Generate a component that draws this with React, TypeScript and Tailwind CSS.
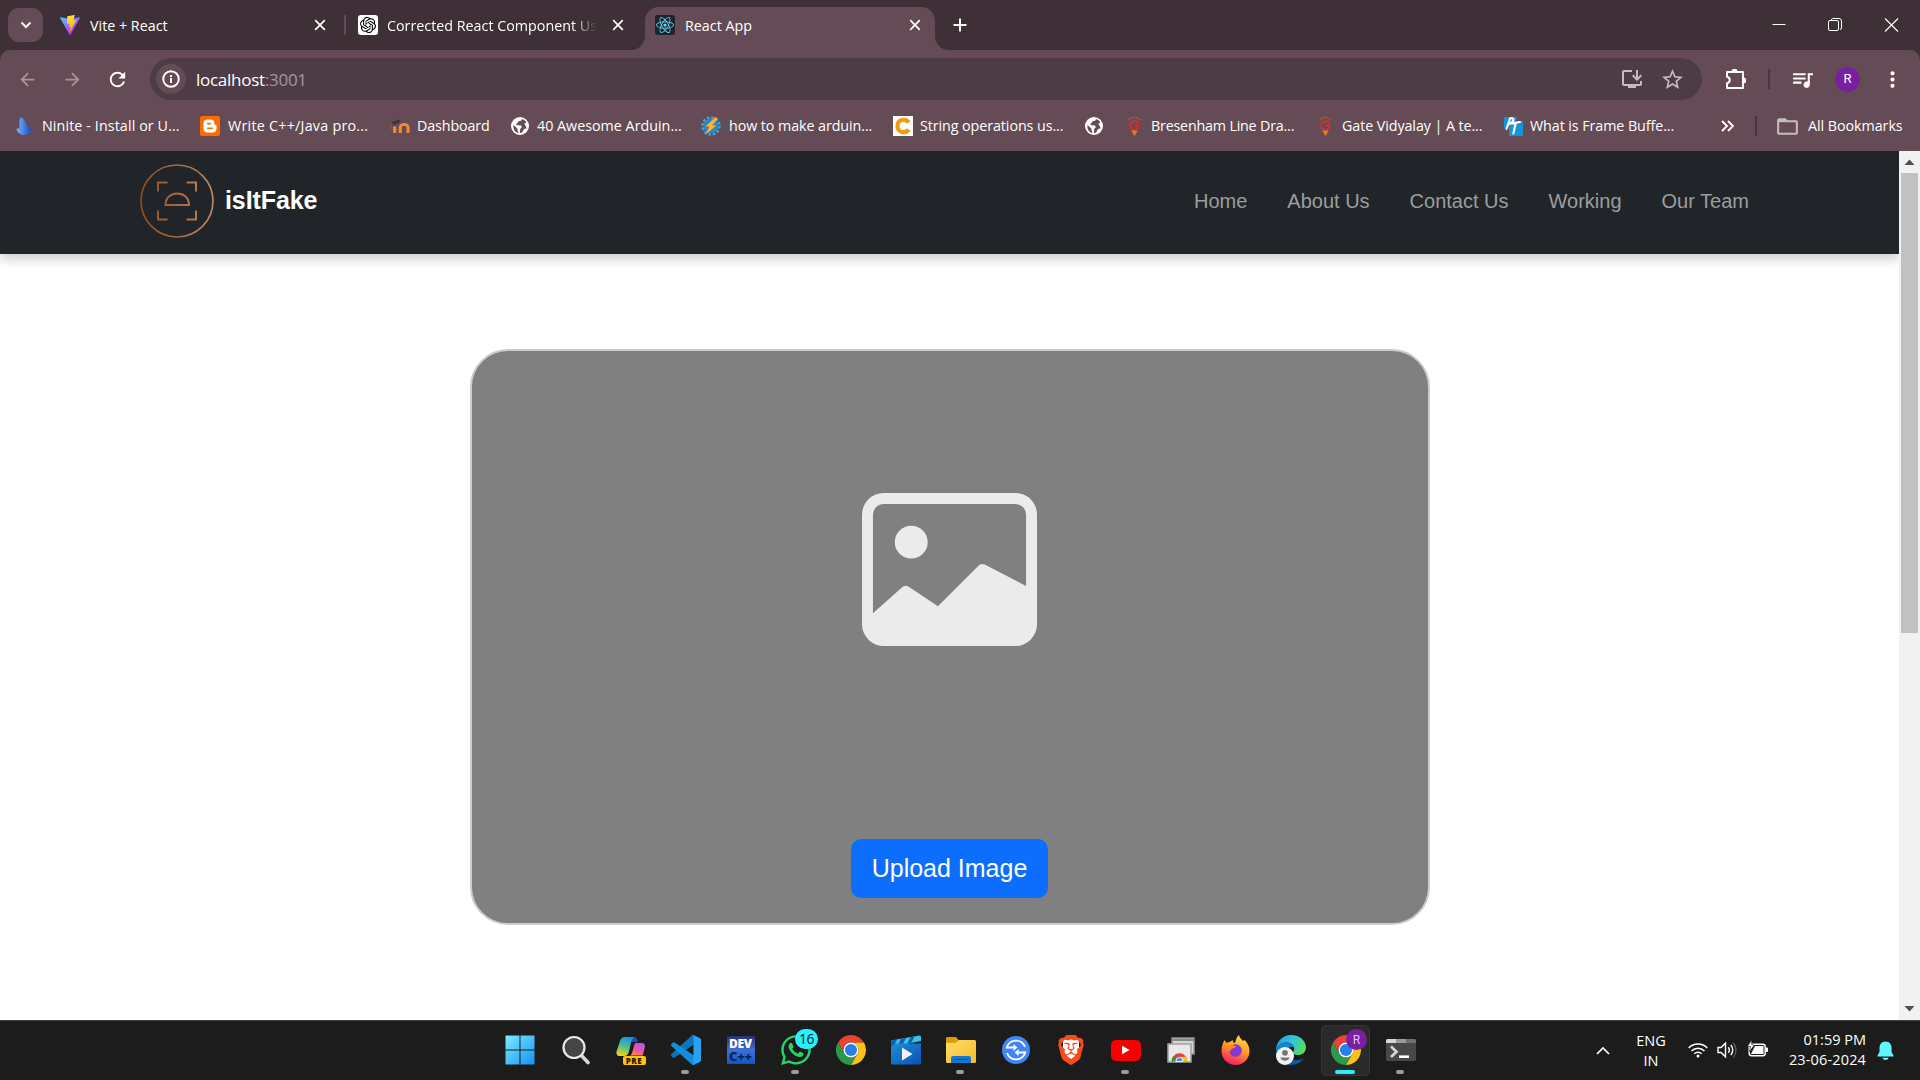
import React from 'react';
import { FaReact, FaWhatsapp } from 'react-icons/fa';
import { SiOpenai, SiBrave } from 'react-icons/si';
import { BsImage } from 'react-icons/bs';
import {
  MdArrowBack, MdArrowForward, MdRefresh, MdOutlineInstallDesktop, MdStarBorder,
  MdQueueMusic, MdMoreVert, MdFolderOpen,
} from 'react-icons/md';

type Kids = { children?: React.ReactNode };

function CloseX() {
  return (
    <svg width="20" height="20" viewBox="0 0 20 20" stroke="#fff" strokeWidth="1.7">
      <path d="M5.2 5.2l9.6 9.6M14.8 5.2l-9.6 9.6" />
    </svg>
  );
}

function ViteLogo() {
  return (
    <svg width="20" height="20" viewBox="0 0 256 257">
      <defs>
        <linearGradient id="viteA" x1="0" x2="0.6" y1="0" y2="0.85"><stop offset="0" stopColor="#41D1FF" /><stop offset="1" stopColor="#BD34FE" /></linearGradient>
        <linearGradient id="viteB" x1="0.4" x2="0.5" y1="0" y2="1"><stop offset="0" stopColor="#FFEA83" /><stop offset="0.1" stopColor="#FFDD35" /><stop offset="1" stopColor="#FFA800" /></linearGradient>
      </defs>
      <path fill="url(#viteA)" d="M255.153 37.938L134.897 252.976c-2.483 4.44-8.862 4.466-11.382.048L.875 37.958c-2.746-4.814 1.371-10.646 6.827-9.67l120.385 21.517a6.537 6.537 0 0 0 2.322-.004l117.867-21.483c5.438-.991 9.574 4.796 6.877 9.62Z" />
      <path fill="url(#viteB)" d="M185.432.063L96.44 17.501a3.268 3.268 0 0 0-2.634 3.014l-5.474 92.456a3.268 3.268 0 0 0 3.997 3.378l24.777-5.718c2.318-.535 4.413 1.507 3.936 3.838l-7.361 36.047c-.495 2.426 1.782 4.5 4.151 3.78l15.304-4.649c2.372-.72 4.652 1.36 4.15 3.788l-11.698 56.621c-.732 3.542 3.979 5.473 5.943 2.437l1.313-2.028l72.516-144.72c1.215-2.423-.88-5.186-3.54-4.672l-25.505 4.922c-2.396.462-4.435-1.77-3.759-4.114l16.646-57.705c.677-2.35-1.37-4.583-3.769-4.113Z" />
    </svg>
  );
}

function TabStrip() {
  return (
    <div className="flex h-[50px] bg-[#3f3037] text-[14.3px] text-white">
      <div className="ml-2 mt-2 flex h-[34px] w-[35px] shrink-0 items-center justify-center rounded-[11px] bg-[#654b55]">
        <svg width="12" height="8" viewBox="0 0 12 8" fill="none" stroke="#fff" strokeWidth="2"><path d="M1.5 1.5L6 6l4.5-4.5" /></svg>
      </div>
      <div className="ml-[17px] flex h-[50px] w-[286px] shrink-0 items-center">
        <ViteLogo />
        <span className="ml-[10px] grow pt-px">Vite + React</span>
        <span className="mr-[14px]"><CloseX /></span>
        <span className="h-5 w-[2px] rounded bg-[#654b55]" />
      </div>
      <div className="ml-[12px] flex h-[50px] w-[270px] shrink-0 items-center">
        <span className="flex size-5 items-center justify-center rounded-[3px] bg-white text-black"><SiOpenai size={16} /></span>
        <span className="ml-[9px] w-[210px] overflow-hidden whitespace-nowrap pt-px [mask-image:linear-gradient(90deg,#000_88%,transparent)]">Corrected React Component Us</span>
        <span className="ml-[11px]"><CloseX /></span>
      </div>
      <div className="-ml-px flex h-[50px] shrink-0">
        <div className="w-[18px] bg-[#654b55]"><div className="h-[50px] w-[18px] rounded-br-[14px] bg-[#3f3037]" /></div>
        <div className="mt-[7px] flex h-[43px] w-[290px] items-center rounded-t-[14px] bg-[#654b55] pb-[7px] pl-[10px] pr-[10px]">
          <span className="flex size-5 items-center justify-center rounded-[3px] bg-[#20232a] text-[#61dafb]"><FaReact size={18} /></span>
          <span className="ml-[10px] grow pt-px">React App</span>
          <CloseX />
        </div>
        <div className="w-[18px] bg-[#654b55]"><div className="h-[50px] w-[18px] rounded-bl-[14px] bg-[#3f3037]" /></div>
      </div>
      <svg className="mt-[18px]" width="14" height="14" viewBox="0 0 14 14" stroke="#fff" strokeWidth="2"><path d="M7 .5v13M.5 7h13" /></svg>
      <div className="ml-auto mt-[17px] flex gap-[42px] pr-[21px]">
        <svg width="14" height="16" viewBox="0 0 14 16" stroke="#fff"><path d="M.5 7.5h13" /></svg>
        <svg width="14" height="16" viewBox="0 0 14 16" stroke="#fff" fill="none"><path d="M3.500 3.500v-1a1.500 1.500 0 0 1 1-1h6.500a2.500 2.500 0 0 1 2.500 2.500v7a1.500 1.500 0 0 1-1.500 1.500" /><rect x=".5" y="3.500" width="10" height="10" rx="1.500" /></svg>
        <svg width="15" height="16" viewBox="0 0 15 16" stroke="#fff" strokeWidth="1.100"><path d="M1 1.500l13 13M14 1.500l-13 13" /></svg>
      </div>
    </div>
  );
}

function Puzzle() {
  return (
    <svg width="24" height="24" viewBox="0 0 24 24" fill="none" stroke="#fff" strokeWidth="2" strokeLinejoin="round">
      <path d="M3 5h5.500a2 2 0 0 1 4 0H19v6.500a2 2 0 0 1 0 4V21H3v-4.800c3.600-.4 3.600-6 0-6.400z" />
      <path d="M8.500 5a2 2 0 0 1 4 0zM19 11.500a2 2 0 0 1 0 4z" fill="#fff" />
    </svg>
  );
}

function Toolbar() {
  return (
    <div className="bg-[#3f3037]">
      <div className="flex h-[58px] items-center rounded-t-[10px] bg-[#654b55]">
        <MdArrowBack className="ml-[17px]" size={21} color="#a6959c" />
        <MdArrowForward className="ml-6" size={21} color="#a6959c" />
        <MdRefresh className="ml-[23px]" size={23} color="#fff" />
        <div className="ml-[21px] flex h-[42px] w-[1552px] items-center rounded-full bg-[#4d3c45] pl-[6px] pr-[17px]">
          <span className="flex size-[30px] items-center justify-center rounded-full bg-[#654b55]">
            <svg width="18" height="18" viewBox="0 0 18 18" fill="none" stroke="#fff" strokeWidth="1.900"><circle cx="9" cy="9" r="7.800" /><path d="M9 8v5M9 5v1.900" /></svg>
          </span>
          <span className="ml-[10px] grow pt-px text-[17px] tracking-[-0.27px] text-white">localhost<span className="text-[#a6959c]">:3001</span></span>
          <MdOutlineInstallDesktop size={24} color="#c4bcc0" />
          <MdStarBorder className="ml-4" size={25} color="#c4bcc0" />
        </div>
        <span className="ml-[22px]"><Puzzle /></span>
        <span className="ml-[20px] h-5 w-[2px] bg-[#4a3840]" />
        <MdQueueMusic className="ml-[20px]" size={25} color="#fff" />
        <span className="ml-[20px] flex size-[25px] items-center justify-center rounded-full bg-[#7b1fa2] font-['Roboto'] text-[13px] text-white">R</span>
        <MdMoreVert className="ml-[20px]" size={25} color="#fff" />
      </div>
    </div>
  );
}

function Globe() {
  return (
    <svg width="18" height="18" viewBox="0 0 18 18">
      <circle cx="9" cy="9" r="9" fill="#fff" />
      <path d="M11 2.200c-.3 1.800-1.700 1.700-3.200 2C6.500 4.500 7.300 6 6 6.600 4.900 7 5 8 6 8.200c2 .2 4.600-.2 4.700 1.500.1 1.300-1.200 1.300-1.500 2.500l-.5 3.800c2.600.2 3.200-1.600 3.700-3 .5-1.200 2.600-1.500 3.400-1.700M2.500 8l3.500 3.200c.8.8.2 1.800.8 2.700l.6 2.200C4 15.300 1.800 12 2.500 8zM11.200 4.700l2.600 1.700 1.600-.6C14.500 3.500 12.800 2.400 11 2.200z" fill="#654b55" />
    </svg>
  );
}

function Bulb() {
  return (
    <svg width="13" height="20" viewBox="0 0 13 20" fill="none">
      <path d="M.8 4a7.500 7.500 0 0 1 11.400 0" stroke="#a8672a" strokeWidth="1.600" strokeDasharray="1.400 1" />
      <path d="M10.300 7C8 3.800 2.200 4.800 2.200 9.300c0 4 2.800 4.700 4.300 4.700s4.100-.8 3.700-4.500H6.800" stroke="#e32832" strokeWidth="1.800" />
      <path d="M3.800 14.500h5.400v1.800l-1.500 1v2H5.300v-2l-1.500-1z" fill="#e8772a" />
    </svg>
  );
}

function Ninite() {
  return (
    <svg width="16" height="20" viewBox="0 0 16 20">
      <defs><linearGradient id="nin" x1="0" x2="1"><stop offset="0" stopColor="#7db4ff" /><stop offset="1" stopColor="#174cc4" /></linearGradient></defs>
      <path d="M4.500 1c3 1 6 5 6.500 10 1.500-1 3-.5 4 1-1 5-3.500 7-7 7s-7-2.500-7.500-6c1-1 2.200-1 3 0C3 8 3.300 4 4.500 1z" fill="url(#nin)" />
    </svg>
  );
}

function Moodle() {
  return (
    <svg width="21" height="16" viewBox="0 0 21 16" fill="none">
      <path d="M4.700 15V8.500M10.300 15V9.500M10.300 9.500c0-4 7.700-4 7.700 0V15" stroke="#ef8b35" strokeWidth="3.200" />
      <path d="M1 4.500l8-3 1.500 2.300-6 3z" fill="#3a3438" /><path d="M1.200 4.800l-.4 7" stroke="#8d5b42" />
    </svg>
  );
}

function GearBolt() {
  return (
    <svg width="20" height="20" viewBox="0 0 20 20">
      <circle cx="10" cy="10" r="8.300" fill="none" stroke="#3fa2dc" strokeWidth="3" strokeDasharray="2.600 1.745" />
      <circle cx="10" cy="10" r="7.500" fill="#2b86c4" />
      <path d="M14.500 1L4.500 10.500l4 .3L4 19l11.500-9.500-4.300-.3 5.500-6.500z" fill="#fbb42c" />
    </svg>
  );
}

function Blogger() {
  return (
    <span className="flex size-5 items-center justify-center rounded-[2px] bg-[#ff6a00]">
      <svg width="14" height="14" viewBox="0 0 14 14"><path d="M4 .5h4A3.500 3.500 0 0 1 11.300 4c0 1.500.3 1.700 1.200 1.700s1 .5 1 1.100v2.700a4 4 0 0 1-4 4h-5a4 4 0 0 1-4-4v-5a4 4 0 0 1 3.500-4z" fill="#fff" /><path d="M4.600 4.600h2.800M4.600 9.300h4.800" stroke="#ff6a00" strokeWidth="1.600" strokeLinecap="round" /></svg>
    </span>
  );
}

function PT() {
  return (
    <svg width="20" height="20" viewBox="0 0 20 20" fill="none">
      <path d="M1 1h13l-1 4h7v15H6V10L1 13z" fill="#1593dd" />
      <path d="M3.500 13L7 2.500C11 1 12.500 5 6 8M8.500 7.500L17 6M12.800 7L10.300 17.500" stroke="#fff" strokeWidth="2.100" strokeLinecap="round" />
    </svg>
  );
}

function Mark({ w, gap, icon, children }: { w: string; gap: string; icon: React.ReactNode } & Kids) {
  return <div className={'flex shrink-0 items-center whitespace-nowrap ' + w + ' ' + gap}>{icon}<span>{children}</span></div>;
}

function Bookmarks() {
  return (
    <div className="flex h-[43px] items-center bg-[#654b55] pb-[7px] pl-4 text-[14.3px] text-white">
      <Mark w="w-[184px] tracking-[0.1px]" gap="gap-[10px]" icon={<Ninite />}>Ninite - Install or U...</Mark>
      <Mark w="w-[190px] tracking-[0.25px]" gap="gap-[8px]" icon={<Blogger />}>Write C++/Java pro...</Mark>
      <Mark w="w-[121px] tracking-[-0.12px]" gap="gap-[6px]" icon={<Moodle />}>Dashboard</Mark>
      <Mark w="w-[190px]" gap="gap-[8px]" icon={<Globe />}>40 Awesome Arduin...</Mark>
      <Mark w="w-[192px] tracking-[-0.08px]" gap="gap-[8px]" icon={<GearBolt />}>how to make arduin...</Mark>
      <Mark w="w-[192px] tracking-[-0.08px]" gap="gap-[7px]" icon={<span className="flex size-5 items-center justify-center bg-white"><svg width="18" height="18" viewBox="0 0 18 18" fill="none"><path d="M14.800 5.500C11.500.8 3.500 2.500 3.500 9s8 8.200 11.300 3.500" stroke="#f29a12" strokeWidth="4.200" /></svg></span>}>String operations us...</Mark>
      <Mark w="w-[43px]" gap="gap-0" icon={<Globe />} />
      <Mark w="w-[191px] tracking-[-0.2px]" gap="gap-[10px]" icon={<Bulb />}>Bresenham Line Dra...</Mark>
      <Mark w="w-[184px] tracking-[-0.08px]" gap="gap-[10px]" icon={<Bulb />}>Gate Vidyalay | A te...</Mark>
      <Mark w="w-[218px] tracking-[-0.08px]" gap="gap-[7px]" icon={<PT />}>What is Frame Buffe...</Mark>
      <svg width="13" height="12" viewBox="0 0 13 12" fill="none" stroke="#fff" strokeWidth="1.900"><path d="M1 1l5 5-5 5M7 1l5 5-5 5" /></svg>
      <span className="ml-[21px] h-5 w-[2px] bg-[#46353d]" />
      <MdFolderOpen className="ml-[18px]" size={25} color="#c4bcc0" />
      <span className="ml-[8px] whitespace-nowrap tracking-[-0.05px]">All Bookmarks</span>
    </div>
  );
}

function SiteLogo() {
  return (
    <svg width="76" height="76" viewBox="0 0 76 76" fill="none" stroke="url(#copper)" strokeWidth="2">
      <defs><linearGradient id="copper" gradientUnits="userSpaceOnUse" x1="0" x2="76" y1="0" y2="0"><stop offset="0" stopColor="#8a4b1f" /><stop offset="1" stopColor="#c08765" /></linearGradient></defs>
      <circle cx="38" cy="38" r="36" strokeWidth="1.700" />
      <path d="M19 28.500V19.500h9.500M47.500 19.500H57v9M57 47.500V56.500H47.500M28.500 56.500H19v-9M26.500 42c0-15.500 23.500-15.500 23.500 0z" />
    </svg>
  );
}

function Scrollbar() {
  return (
    <div className="flex w-[21px] shrink-0 flex-col items-center bg-[#f1f1f1]">
      <svg width="21" height="22" viewBox="0 0 21 22"><path d="M10.500 8.500l5 5.500h-10z" fill="#505050" /></svg>
      <div className="h-[460px] w-[17px] bg-[#c1c1c1]" />
      <svg className="mt-auto" width="21" height="22" viewBox="0 0 21 22"><path d="M10.500 13.500l5-5.500h-10z" fill="#505050" /></svg>
    </div>
  );
}

function Page() {
  return (
    <div className="flex h-[869px] font-['Liberation_Sans',Arial,sans-serif]">
      <div className="flex w-[1899px] flex-col overflow-hidden bg-white">
        <nav className="flex h-[103px] shrink-0 items-center bg-[#212529] pb-[3px] pl-[139px] pr-[150px] shadow-[0_5px_10px_rgba(40,25,35,0.22)]">
          <SiteLogo />
          <span className="ml-[10px] grow text-[25px] font-bold tracking-[-0.1px] text-white">isItFake</span>
          <div className="flex gap-10 text-[20px] text-[#9b9d9e]">
            <span>Home</span><span>About Us</span><span>Contact Us</span><span>Working</span><span>Our Team</span>
          </div>
        </nav>
        <div className="mx-auto mt-[95px] flex h-[576px] w-[960px] flex-col items-center rounded-[38px] border-2 border-[#ccc] bg-[#808080]">
          <BsImage className="mt-[131px]" size={175} color="#ebebeb" />
          <button className="mt-auto mb-[25px] flex h-[59px] w-[197px] items-center justify-center rounded-[10px] bg-[#0d6efd] pt-px text-[25px] text-white">Upload Image</button>
        </div>
      </div>
      <Scrollbar />
    </div>
  );
}

function Chrome() {
  return (
    <svg width="30" height="30" viewBox="0 0 48 48">
      <path d="M24 12h20.780A24 24 0 0 0 3.215 12l10.393 18A12 12 0 0 1 24 12z" fill="#ea4335" />
      <path d="M34.390 30L24 48A24 24 0 0 1 3.215 12l10.393 18a12 12 0 0 0 20.782 0z" fill="#2a9a48" />
      <path d="M34.390 30L24 48a24 24 0 0 0 20.780-36H24a12 12 0 0 1 10.390 18z" fill="#fbc116" />
      <circle cx="24" cy="24" r="12" fill="#fff" /><circle cx="24" cy="24" r="9.700" fill="#2b7de9" />
    </svg>
  );
}

function Slot({ dot, children }: { dot?: boolean } & Kids) {
  return (
    <div className="relative flex h-[59px] w-[55px] shrink-0 items-center justify-center pb-px">
      {children}
      {dot && <span className="absolute bottom-[6px] left-[23px] h-1 w-2 rounded-full bg-[#9a9a9a]" />}
    </div>
  );
}

function TaskIcons() {
  return (
    <div className="flex pl-[493px]">
      <Slot>
        <svg className="mr-[2px]" width="30" height="30" viewBox="0 0 30 30"><defs><linearGradient id="win" x1="0" y1="0" x2="30" y2="30" gradientUnits="userSpaceOnUse"><stop offset="0" stopColor="#7deeff" /><stop offset="1" stopColor="#1490f5" /></linearGradient></defs><path fill="url(#win)" d="M.5.5h14v14h-14zM15.500.5h14v14h-14zM.5 15.500h14v14h-14zM15.500 15.500h14v14h-14z" /></svg>
      </Slot>
      <Slot>
        <svg width="30" height="30" viewBox="0 0 30 30"><path d="M20 20l7 7.500" stroke="#d5d8dd" strokeWidth="3.600" strokeLinecap="round" /><circle cx="13" cy="12.500" r="10.500" fill="#454545" stroke="#e9e9e9" strokeWidth="2.200" /></svg>
      </Slot>
      <Slot>
        <div className="relative">
          <svg width="30" height="30" viewBox="0 0 30 30">
            <defs>
              <linearGradient id="cpA" x1="0.600" y1="0" x2="0.300" y2="1"><stop offset="0" stopColor="#1a8fe8" /><stop offset="0.500" stopColor="#4fbf8c" /><stop offset="1" stopColor="#f2d313" /></linearGradient>
              <linearGradient id="cpB" x1="0.800" y1="0" x2="0.300" y2="1"><stop offset="0" stopColor="#a45cf0" /><stop offset="0.600" stopColor="#f0569b" /><stop offset="1" stopColor="#ff8a4d" /></linearGradient>
            </defs>
            <path d="M9 2h8c3 0 4 1 5 5h-7z" fill="#1c49c9" />
            <path d="M9 2h10c-3 1-3.500 4-4.500 8l-2 8c-1 2-2 3-4 3H4c-3 0-4-2-3.300-5L4 6c1-3 2.500-4 5-4z" fill="url(#cpA)" />
            <path d="M20 8h5c3.500 0 4.500 2 3.700 5l-2 7.500H13c2 0 3-2 3.500-4L18 11c.4-2 1-3 2-3z" fill="url(#cpB)" />
          </svg>
          <span className="absolute bottom-0 left-[7px] flex h-[9px] w-[23px] items-center justify-center rounded-[2px] bg-[#ffc20d] text-[8px] leading-none font-extrabold tracking-[0.5px] text-[#1d1d1d]">PRE</span>
        </div>
      </Slot>
      <Slot dot>
        <svg width="30" height="30" viewBox="0 0 100 100">
          <path fill="#0a76bd" d="M96.500 10.800L75.900.9c-2.400-1.200-5.300-.7-7.200 1.200L1.300 63.500c-1.800 1.600-1.800 4.500 0 6.100l5.500 5c1.500 1.300 3.800 1.400 5.300.2L100 16z" />
          <path fill="#1090db" d="M96.500 89.200l-20.600 9.900c-2.400 1.200-5.300.7-7.200-1.200L1.300 36.500c-1.800-1.600-1.800-4.500 0-6.100l5.500-5c1.500-1.300 3.800-1.400 5.300-.2L100 84z" />
          <path fill="#27a3f1" d="M75.900 99.100c-2.400 1.200-5.300.7-7.200-1.200 2.300 2.300 6.300.7 6.300-2.600V4.700c0-3.300-4-5-6.300-2.600 1.900-1.900 4.800-2.400 7.200-1.200l20.600 9.900c2.100 1 3.500 3.200 3.500 5.600v67.200c0 2.400-1.400 4.600-3.500 5.600z" />
        </svg>
      </Slot>
      <Slot>
        <div className="flex h-[28px] w-[28px] flex-col items-center justify-center bg-linear-to-b from-[#2c2f79] via-[#3d6fd8] to-[#0a57c8] text-[12px] leading-[13px] font-extrabold">
          <span className="tracking-[-0.3px] text-white">DEV</span><span className="text-[13px] tracking-[-0.3px] text-[#08265c]">C++</span>
        </div>
      </Slot>
      <Slot dot>
        <FaWhatsapp size={34} color="#25d366" />
        <span className="absolute left-[27px] top-[8px] flex h-5 w-[23px] items-center justify-center rounded-full bg-[#29eefc] text-[14px] leading-none tracking-[-0.6px] text-[#10272a]">16</span>
      </Slot>
      <Slot><Chrome /></Slot>
      <Slot>
        <svg width="30" height="30" viewBox="0 0 30 30"><defs><linearGradient id="mov" x1="0" y1="0" x2="1" y2="1"><stop offset="0" stopColor="#1b8fd6" /><stop offset="1" stopColor="#0d50b4" /></linearGradient></defs><path d="M0 5.500L28.500.5 30 1v5L2 11.500 0 12z" fill="#36c3f2" /><path d="M0 5.500l6-1-3 6.500-3 1zM10 3.800l5-.8-3 6-5 .9zM19.500 2.200l4-.7-3 6-4 .7z" fill="#0d62ad" /><path d="M0 12l4-3.500h26V28a1.500 1.500 0 0 1-1.500 1.500h-27A1.500 1.500 0 0 1 0 28z" fill="url(#mov)" /><path d="M11 12.500l10.500 6.500L11 25.500z" fill="#f1f5fa" /></svg>
      </Slot>
      <Slot dot>
        <svg width="30" height="28" viewBox="0 0 30 28"><defs><linearGradient id="fol" x1="0" y1="0" x2="1" y2="1"><stop offset="0" stopColor="#ffdc6a" /><stop offset="1" stopColor="#f8bd26" /></linearGradient></defs><path d="M0 2.500A1.500 1.500 0 0 1 1.500 1H10l3 3.500V8H0z" fill="#e09a06" /><path d="M0 7l10-.3L13 4h15.500A1.500 1.500 0 0 1 30 5.500v20a1.500 1.500 0 0 1-1.500 1.500h-27A1.500 1.500 0 0 1 0 25.500z" fill="url(#fol)" /><path d="M5 27v-5a2 2 0 0 1 2-2h16a2 2 0 0 1 2 2v5z" fill="#1179d4" /><path d="M8.500 23.500h13" stroke="#0a4c93" strokeWidth="1.200" /></svg>
      </Slot>
      <Slot>
        <svg width="28" height="28" viewBox="0 0 28 28" fill="none"><circle cx="14" cy="14" r="14" fill="#4285f4" /><path d="M4.500 12.500A9.600 9.600 0 0 1 23 11M23.500 15.500A9.600 9.600 0 0 1 5 17M5 11.500h9M23 16.500h-9" stroke="#fff" strokeWidth="1.900" /><path d="M11.500 8l3.800 3.500-3.800 3.500zM16.500 13l-3.800 3.500 3.800 3.500z" fill="#fff" /></svg>
      </Slot>
      <Slot>
        <span className="relative block size-[30px]"><span className="absolute left-[7px] top-[4px] h-[21px] w-4 rounded-b-full bg-white" /><SiBrave className="absolute" size={30} color="#fb4a1c" /></span>
      </Slot>
      <Slot dot>
        <span className="flex h-[21px] w-[30px] items-center justify-center rounded-[5px] bg-[#f60002]"><svg width="9" height="10" viewBox="0 0 9 10"><path d="M1 .8L8.500 5 1 9.200z" fill="#fff" /></svg></span>
      </Slot>
      <Slot>
        <svg width="28" height="26" viewBox="0 0 28 26"><path d="M5 1h22v16H5z" fill="#d6d6d6" stroke="#919191" strokeWidth="1.500" /><path d="M5 3h22" stroke="#888" strokeWidth="2" /><path d="M1 7h23v18H1z" fill="#e9e9e9" stroke="#a0a0a0" strokeWidth="1.500" /><path d="M4.500 24.300a8 8 0 0 1 16 0z" fill="#e44134" /><path d="M4.500 24.300a8 8 0 0 1 2-5.300l4 5.300z" fill="#1f9d4d" /><path d="M20.500 24.300a8 8 0 0 0-1.500-4.600h-6l1 4.600z" fill="#fbc116" /><path d="M8.800 24.300a3.700 3.700 0 0 1 7.400 0z" fill="#2b7de9" stroke="#fff" /></svg>
      </Slot>
      <Slot>
        <svg width="29" height="30" viewBox="0 0 29 30"><defs><linearGradient id="ff" x1="0.700" y1="0" x2="0.300" y2="1"><stop offset="0" stopColor="#ffe14a" /><stop offset="0.450" stopColor="#ff9a26" /><stop offset="1" stopColor="#f5156c" /></linearGradient></defs><path d="M3.500 5l2 3c1-.8 2-1 3-1l3.500-2c-.5 1.500 0 2.500 2 3 1-3 1-5 4-8 .5 3 2.500 4 4 6l1.500-1c3 3 5 6.500 5 11A14 14 0 0 1 .5 16C.5 12 1.500 8 3.500 5z" fill="url(#ff)" /><circle cx="14.500" cy="15.500" r="6.300" fill="#8438d8" /><path d="M7 11c3-1.500 6-.5 8 .3-1 2-3.500 2-5 3-.5 2.500-2 2.500-3.500 0z" fill="#ff8a1f" /></svg>
      </Slot>
      <Slot>
        <svg width="30" height="30" viewBox="0 0 30 30"><defs><linearGradient id="edA" x1="0" y1="0.300" x2="1" y2="0.600"><stop offset="0" stopColor="#1fa0e6" /><stop offset="0.550" stopColor="#35c6d2" /><stop offset="1" stopColor="#5bdc50" /></linearGradient></defs><path d="M0 16A15 15 0 0 1 15 0c9 0 15 6 15 12.500 0 5-4 7.500-8 7.500-3.500 0-5-1.300-5-2.500 0-1 1.200-1.500 1.200-4C18 10 14 7.500 10 7.500 5 7.500 1 11 0 16z" fill="url(#edA)" /><path d="M0 16c1-5 5-8.500 10-8.500 4 0 7 2 8 4.500-5-1.500-7.500 2-7.500 5.500 0 5 5 8 10 7.800 3.500-.2 6-1.300 7.300-2C25.500 27 21 30 15 30A15 15 0 0 1 0 16z" fill="#0c59a4" /><path d="M0 16c1-5 5-8.500 10-8.500 4 0 7 2 8 4.500-5-1.500-7.500 2-7.500 5.500z" fill="#1583ce" /><circle cx="9" cy="21" r="9" fill="#f4f4f4" /><circle cx="9" cy="17.800" r="2.900" fill="#767676" /><path d="M4.500 22.500h9c0 4.200-9 4.200-9 0z" fill="#767676" /></svg>
      </Slot>
      <div className="relative flex h-[59px] w-[55px] shrink-0 items-center justify-center pb-px">
        <span className="absolute inset-x-[3px] inset-y-1 rounded-[5px] border border-[#353535] bg-[#2a2a2a]" />
        <span className="relative"><Chrome /></span>
        <span className="absolute left-[28px] top-2 flex size-[21px] items-center justify-center rounded-full bg-[#7b1fa2] font-['Roboto'] text-[12px] text-[#dcc6e6]">R</span>
        <span className="absolute bottom-[6px] left-[17px] h-1 w-5 rounded-full bg-[#29eefc]" />
      </div>
      <Slot dot>
        <svg width="30" height="22" viewBox="0 0 30 22" fill="none"><rect width="30" height="22" rx="1.500" fill="#484848" /><path d="M0 4V1.500A1.500 1.500 0 0 1 1.500 0H10v4z" fill="#d5d5d5" /><path d="M10 0h10v4H10z" fill="#9a9a9a" /><path d="M20 0h8.500A1.500 1.500 0 0 1 30 1.500V4H20z" fill="#6f6f6f" /><path d="M5 7.500l5.500 5.300L5 18" stroke="#d4d4d4" strokeWidth="2.700" /><path d="M13 17.700h10" stroke="#fff" strokeWidth="2.600" /></svg>
      </Slot>
    </div>
  );
}

function Tray() {
  return (
    <div className="ml-auto flex items-center pr-[26px] text-[14.5px] leading-5 text-white">
      <svg width="14" height="9" viewBox="0 0 14 9" fill="none" stroke="#fff" strokeWidth="1.700"><path d="M1 8l6-6 6 6" /></svg>
      <div className="ml-[23px] flex w-[36px] flex-col text-center"><span>ENG</span><span>IN</span></div>
      <svg className="ml-[19px] mb-[2px]" width="20" height="16" viewBox="0 0 20 16" fill="none" stroke="#fff" strokeWidth="1.500"><path d="M.7 6a13 13 0 0 1 18.600 0M3.500 9a9 9 0 0 1 13 0M6.300 11.700a5.200 5.200 0 0 1 7.400 0" /><circle cx="10" cy="14" r="1.500" fill="#fff" stroke="none" /></svg>
      <svg className="ml-[9px] mb-[2px]" width="21" height="18" viewBox="0 0 21 18" fill="none" stroke="#fff" strokeWidth="1.400"><path d="M1 6.500h3l4.500-4.300v13.600L4 11.500H1zM11.300 6.200a4.500 4.500 0 0 1 0 5.600M13.800 4a7.500 7.500 0 0 1 0 10" /><path d="M16.300 1.800a11 11 0 0 1 0 14.400" stroke="#5a5a5a" /></svg>
      <svg className="ml-[9px] mb-[3px]" width="22" height="18" viewBox="0 0 22 18" fill="none"><rect x="2.200" y="4.200" width="16" height="11.500" rx="2.500" stroke="#fff" strokeWidth="1.400" /><path d="M8 6h8.500v8H4z" fill="#fff" /><path d="M18.500 7.500h1.500a1 1 0 0 1 1 1V11a1 1 0 0 1-1 1h-1.500z" fill="#fff" /><path d="M4.500 0L.5 6.500h3l-1 5L7.500 5H4.800z" fill="#fff" stroke="#1c1c1c" strokeWidth=".6" /></svg>
      <div className="ml-[16px] flex w-[81px] flex-col items-end pb-[2px] whitespace-nowrap"><span>01:59 PM</span><span className="tracking-[0.14px]">23-06-2024</span></div>
      <svg className="ml-[11px]" width="17" height="20" viewBox="0 0 17 20" fill="#5ff6ff"><path d="M8.500.5c4 0 6 3 6 6.200V11l2 3.500v1H.5v-1l2-3.500V6.700C2.500 3.500 4.500.5 8.500.5zM5.500 16.800h6c-.5 3-5.500 3-6 0z" /></svg>
    </div>
  );
}

export default function App() {
  return (
    <div className="h-[1080px] w-[1920px] overflow-hidden font-['Open_Sans','Noto_Sans',sans-serif]">
      <TabStrip />
      <Toolbar />
      <Bookmarks />
      <Page />
      <div className="flex h-[60px] border-t border-[#434343] bg-[#1c1c1c]">
        <TaskIcons />
        <Tray />
      </div>
    </div>
  );
}
